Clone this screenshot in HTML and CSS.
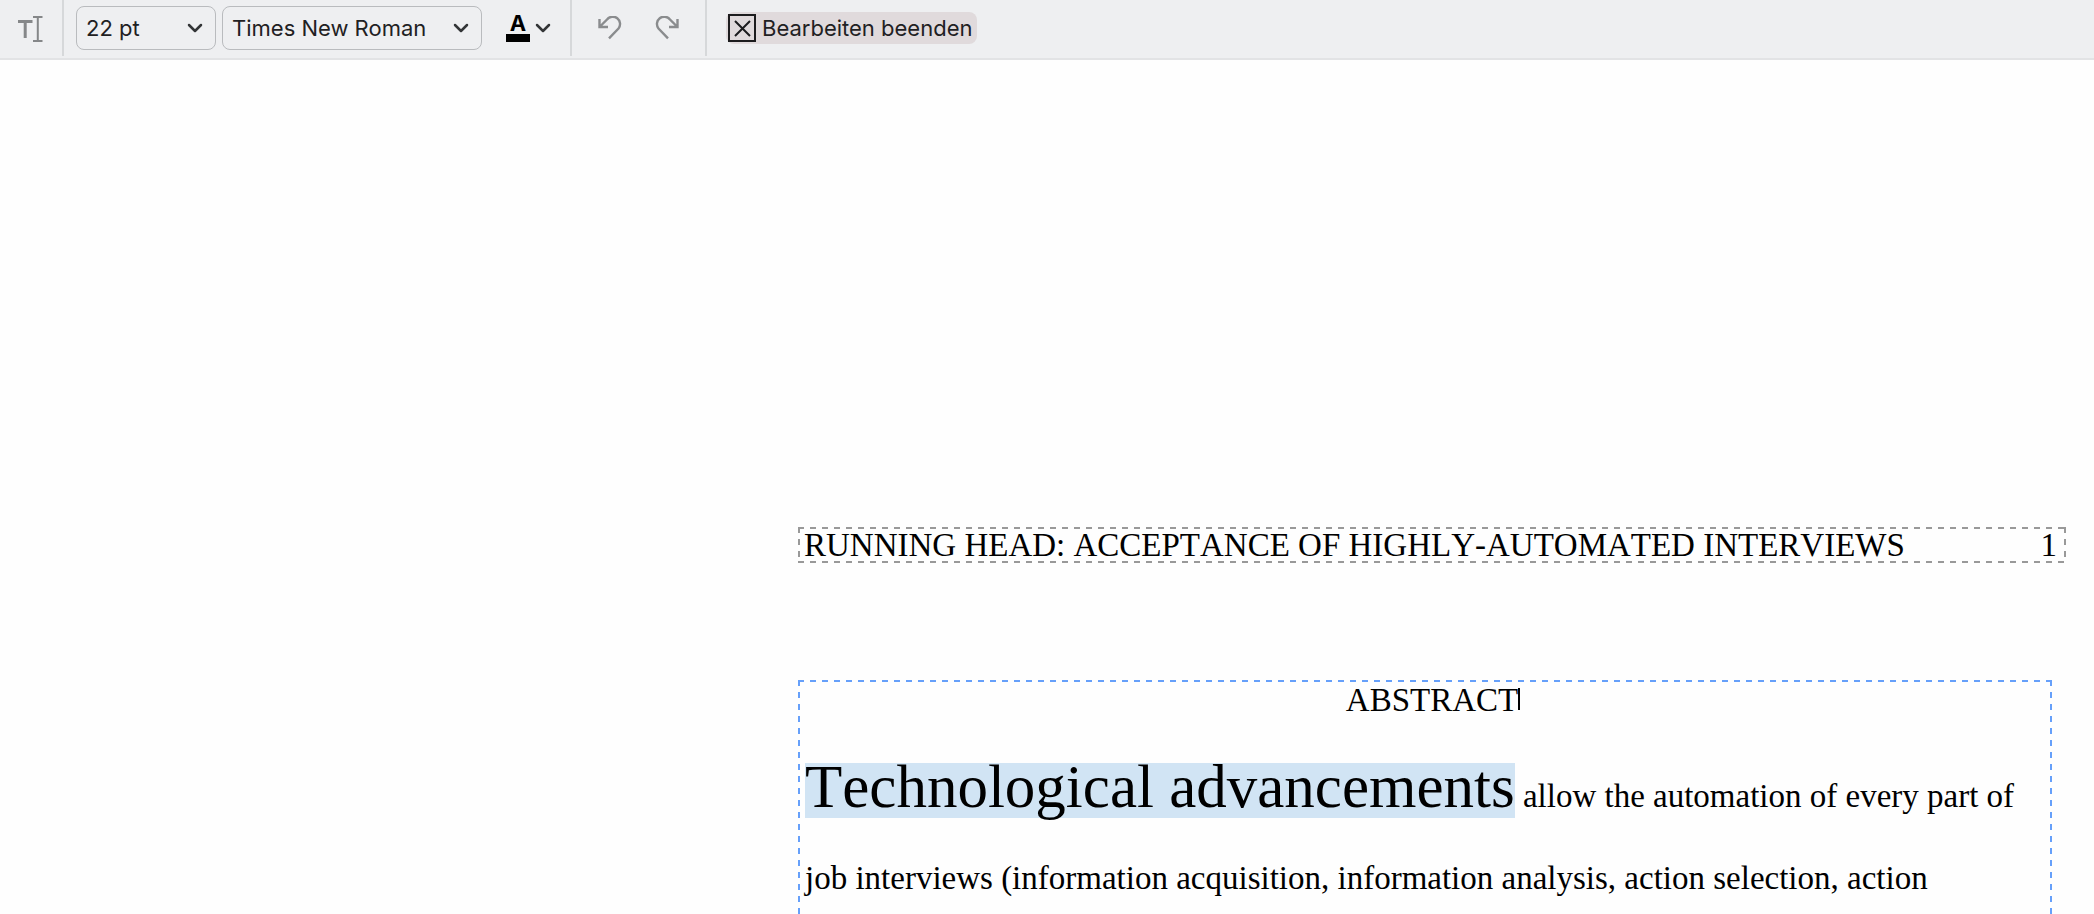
FILE: index.html
```html
<!DOCTYPE html>
<html lang="de">
<head>
<meta charset="utf-8">
<title>PDF bearbeiten</title>
<link rel="stylesheet" href="styles.css">
</head>
<body>
<header class="toolbar" role="toolbar" aria-label="Textwerkzeuge">
  <div class="group group-tool">
    <button class="icon-button" type="button" aria-label="Text bearbeiten">
      <svg width="28" height="28" viewBox="0 0 28 28" fill="none" stroke="#858789">
        <path d="M2 7.500H16.500M9.200 7.500V24" stroke-width="3"/>
        <path d="M17 3H26.500M17 27H26.500M21.800 3V27" stroke-width="2"/>
      </svg>
    </button>
  </div>
  <div class="group group-font">
    <div class="picker picker-size">
      <select class="picker-select" aria-label="Schriftgröße"><option>22 pt</option></select>
      <svg class="picker-arrow" width="16" height="10" viewBox="0 0 16 10"><path class="chevron" d="M2 2l6 6 6-6"/></svg>
    </div>
    <div class="picker picker-family">
      <select class="picker-select" aria-label="Schriftart"><option>Times New Roman</option></select>
      <svg class="picker-arrow" width="16" height="10" viewBox="0 0 16 10"><path class="chevron" d="M2 2l6 6 6-6"/></svg>
    </div>
    <button class="color-button" type="button" aria-label="Textfarbe">
      <span class="color-letter"><span>A</span><span class="color-bar"></span></span>
      <svg width="16" height="10" viewBox="0 0 16 10"><path class="chevron" d="M2 2l6 6 6-6"/></svg>
    </button>
  </div>
  <div class="group group-history">
    <button class="icon-button" type="button" aria-label="Rückgängig">
      <svg width="24" height="24" viewBox="0 0 24 24" class="history-icon"><path d="M1.500 3V11H10M1.500 11L9 3.500A7 7 0 0 1 20.500 12.500L11 22.300"/></svg>
    </button>
    <button class="icon-button" type="button" aria-label="Wiederholen">
      <svg width="24" height="24" viewBox="0 0 24 24" class="history-icon"><path d="M22.500 3V11H14M22.500 11L15 3.500A7 7 0 0 0 3.500 12.500L13 22.300"/></svg>
    </button>
  </div>
  <button class="finish-button" type="button">
    <svg width="28" height="28" viewBox="0 0 28 28" fill="none" stroke="#1c1c1e" stroke-width="2"><rect x="1" y="1" width="26" height="26"/><path d="M7 7l15 15M22 7L7 22"/></svg>
    <span>Bearbeiten beenden</span>
  </button>
</header>
<main class="page">
  <div class="sheet">
    <div class="running-head"><span>RUNNING HEAD: ACCEPTANCE OF HIGHLY-AUTOMATED INTERVIEWS</span><span>1</span></div>
    <section class="text-box">
      <h1 class="title"><span class="title-text">ABSTRACT<span class="caret"></span></span></h1>
      <p class="paragraph"><mark class="selection">Technological advancements</mark> allow the automation of every part of<br>job interviews (information acquisition, information analysis, action selection, action</p>
    </section>
  </div>
</main>
</body>
</html>
```
FILE: styles.css
```css
* { box-sizing: border-box; }

body {
  margin: 0;
  min-height: 100vh;
  display: flex;
  flex-direction: column;
  background: #fefefe;
  color: #000;
}

svg { display: block; flex: none; }

/* Toolbar */
.toolbar {
  display: flex;
  align-items: flex-start;
  height: 60px;
  border-bottom: 2px solid #e2e3e5;
  background: #eeeff1;
  font-family: Inter, "Liberation Sans", sans-serif;
  font-size: 22px;
  color: #1f2123;
}

.group {
  display: flex;
  align-items: center;
  height: 56px;
  border-right: 2px solid #d6d8da;
}

.group-tool { padding: 0 18px 0 16px; }
.group-font { padding: 0 19px 0 12px; gap: 6px; }
.group-history { padding: 0 26px; gap: 33px; }

.icon-button,
.color-button,
.finish-button {
  display: flex;
  align-items: center;
  padding: 0;
  border: 0;
  background: none;
  font: inherit;
  color: inherit;
}

.picker {
  display: grid;
  align-items: center;
}

.picker-size { width: 140px; }
.picker-family { width: 260px; }

.picker-select {
  grid-area: 1 / 1;
  width: 100%;
  height: 44px;
  padding: 0 32px 0 9px;
  appearance: none;
  border: 1px solid #b9bbbe;
  border-radius: 8px;
  background: transparent;
  font: inherit;
  color: inherit;
}

.picker-arrow {
  grid-area: 1 / 1;
  justify-self: end;
  margin-right: 13px;
  pointer-events: none;
}

.chevron {
  fill: none;
  stroke: #333537;
  stroke-width: 2.500;
  stroke-linecap: round;
  stroke-linejoin: round;
}

.color-button {
  margin-left: 18px;
  gap: 5px;
}

.color-letter {
  display: flex;
  flex-direction: column;
  align-items: center;
  gap: 2px;
  font-weight: 700;
  line-height: 18px;
  color: #000;
}

.color-bar {
  width: 24px;
  height: 8px;
  background: #000;
}

.history-icon {
  fill: none;
  stroke: #8a8c8e;
  stroke-width: 2.400;
}

.finish-button {
  height: 32px;
  margin: 12px 0 0 19px;
  padding: 0 5px 0 2px;
  gap: 6px;
  border-radius: 8px;
  background: #e0dadc;
}

/* Document */
.page {
  flex: 1;
  display: grid;
  grid-template-columns: 798fr 1296fr;
  padding-top: 467px;
  font-family: "Liberation Serif", "Times New Roman", serif;
  font-size: 33px;
  font-kerning: none;
}

.sheet {
  grid-column: 2;
  display: flex;
  flex-direction: column;
}

/* Evenly spaced 6px dashes along the frame edges */
.running-head,
.text-box {
  --dash-x: repeating-linear-gradient(to right, var(--frame) 0 6px, transparent 6px 12px);
  --dash-y: repeating-linear-gradient(to bottom, var(--frame) 0 6px, transparent 6px 12px);
}

.running-head {
  --frame: #999;
  display: flex;
  justify-content: space-between;
  margin-right: 28px;
  padding: 2px 9px 2px 6px;
  background:
    var(--dash-x) top / 100% 2px no-repeat,
    var(--dash-x) bottom / 100% 2px no-repeat,
    var(--dash-y) left / 2px 100% no-repeat,
    var(--dash-y) right / 2px 100% no-repeat;
  line-height: 32px;
}

.text-box {
  --frame: #66a0fa;
  flex: 1;
  margin: 117px 42px 0 0;
  padding: 2px 7px 0;
  background:
    var(--dash-x) top / 100% 2px no-repeat,
    var(--dash-y) left / 2px 100% no-repeat,
    var(--dash-y) right / 2px 100% no-repeat;
}

.title {
  margin: 0 0 36px;
  padding-left: 14px;
  font-size: 33px;
  font-weight: 400;
  line-height: 37px;
  text-align: center;
}

.title-text { position: relative; }

.caret {
  position: absolute;
  top: 6px;
  right: -2px;
  width: 2px;
  height: 22px;
  background: #000;
}

.paragraph {
  margin: 0;
  line-height: 82px;
}

.selection {
  display: inline-block;
  padding-bottom: 7px;
  background: #d1e4f4;
  color: inherit;
  font-size: 61px;
  line-height: 48px;
}
```
